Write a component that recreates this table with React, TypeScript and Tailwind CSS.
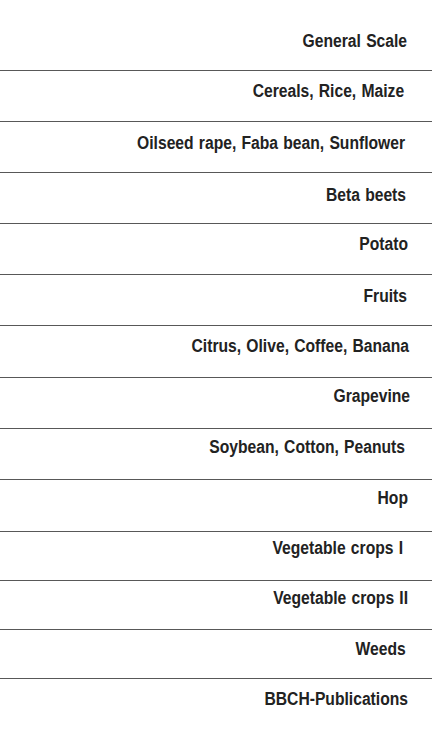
import React from 'react';

type Item = {
  label: string;
  rowClass: string;
};

// row heights / paddings taken from the reference, lines aren't evenly spaced
const items: Item[] = [
  { label: 'General Scale', rowClass: 'h-[71px] pt-[30px] pr-[25px] border-b' },
  { label: 'Cereals, Rice, Maize', rowClass: 'h-[51px] pt-[9px] pr-[28px] border-b' },
  { label: 'Oilseed rape, Faba bean, Sunflower', rowClass: 'h-[51px] pt-[10px] pr-[27px] border-b' },
  { label: 'Beta beets', rowClass: 'h-[51px] pt-[11px] pr-[26px] border-b' },
  { label: 'Potato', rowClass: 'h-[51px] pt-[9px] pr-[24px] border-b' },
  { label: 'Fruits', rowClass: 'h-[51px] pt-[10px] pr-[25px] border-b' },
  { label: 'Citrus, Olive, Coffee, Banana', rowClass: 'h-[52px] pt-[9px] pr-[23px] border-b' },
  { label: 'Grapevine', rowClass: 'h-[51px] pt-[7px] pr-[22px] border-b' },
  { label: 'Soybean, Cotton, Peanuts', rowClass: 'h-[51px] pt-[7px] pr-[27px] border-b' },
  { label: 'Hop', rowClass: 'h-[52px] pt-[7px] pr-[24px] border-b' },
  { label: 'Vegetable crops I', rowClass: 'h-[49px] pt-[5px] pr-[29px] border-b' },
  { label: 'Vegetable crops II', rowClass: 'h-[49px] pt-[6px] pr-[24px] border-b' },
  { label: 'Weeds', rowClass: 'h-[49px] pt-[8px] pr-[26px] border-b' },
  { label: 'BBCH-Publications', rowClass: 'h-[68px] pt-[9px] pr-[24px]' },
];

const App = () => {
  return (
    <div className="w-[432px] h-[747px] bg-white overflow-hidden font-['Liberation_Sans',Arial,sans-serif]">
      <ul className="flex flex-col">
        {items.map((item) => (
          <li
            key={item.label}
            className={`${item.rowClass} border-[#585858] text-right`}
          >
            {/* condensed look: no narrow face installed, so squeeze Arial-metric bold */}
            <span className="inline-block origin-right scale-x-[0.87] whitespace-nowrap text-[18px] leading-[20px] font-bold text-[#222] [word-spacing:1px]">
              {item.label}
            </span>
          </li>
        ))}
      </ul>
    </div>
  );
};

export default App;
